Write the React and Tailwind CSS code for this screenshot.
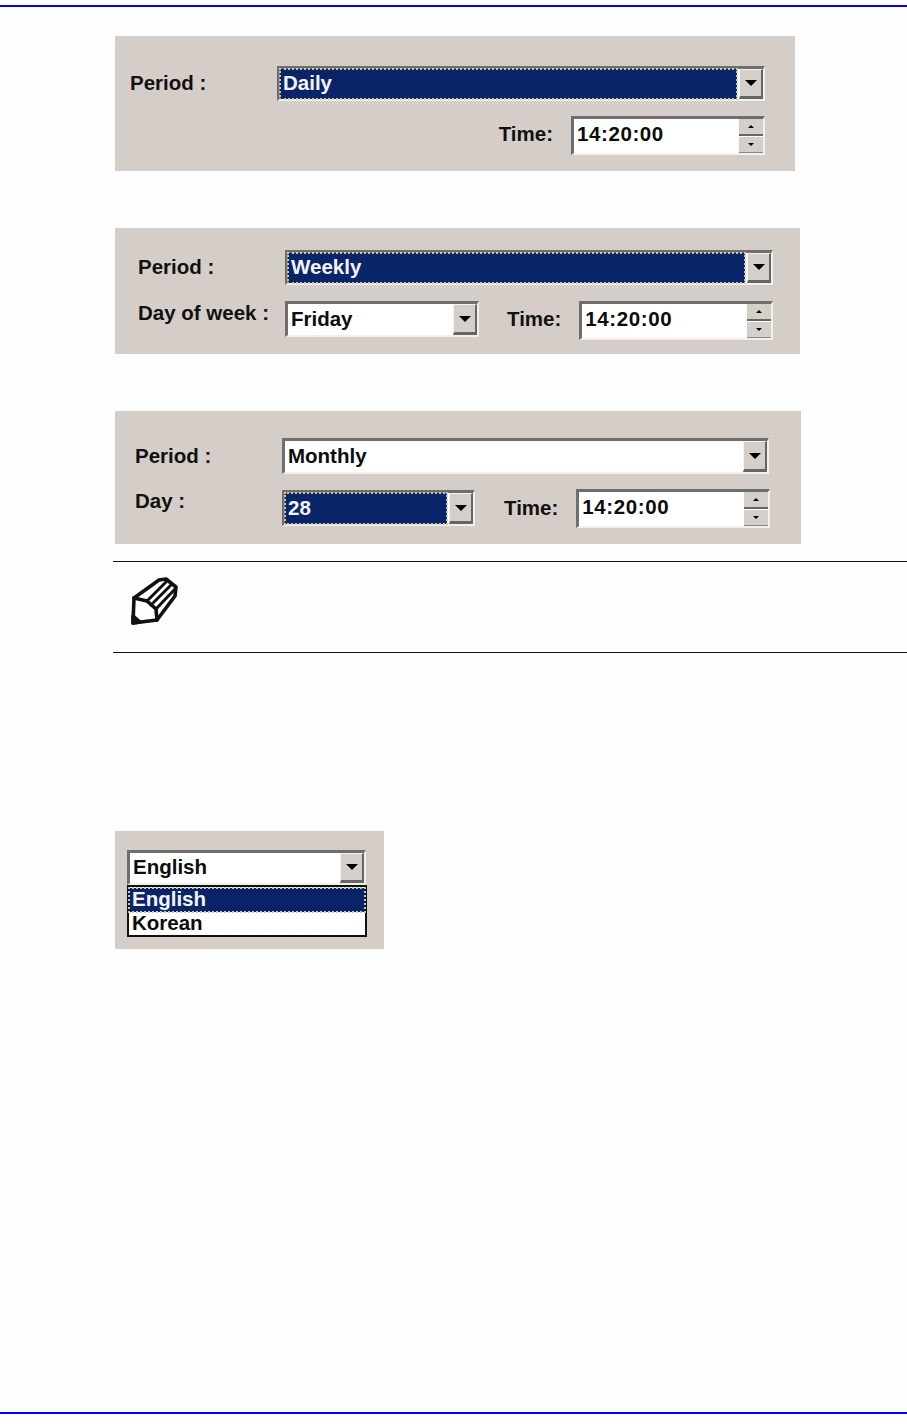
const font = "font-['Liberation_Sans',Arial,sans-serif] font-bold text-[20.5px] leading-none";

function Arrow({ up, small }) {
  const cls = small
    ? up
      ? "border-x-[3px] border-b-[3px] border-x-transparent border-b-black"
      : "border-x-[3px] border-t-[3px] border-x-transparent border-t-black"
    : "border-x-[6px] border-t-[6px] border-x-transparent border-t-black";
  return <span className={`w-0 h-0 ${cls}`} />;
}

function Sunken({ className = "", children }) {
  return (
    <div className={`border-t-[3px] border-l-[3px] border-t-[#6e6e6e] border-l-[#6e6e6e] border-b-2 border-r-2 border-b-[#f2f0ec] border-r-[#f2f0ec] bg-white flex ${className}`}>
      {children}
    </div>
  );
}

function Combo({ value, selected, className }) {
  return (
    <Sunken className={className}>
      <div className={`flex-1 min-w-0 flex items-center pl-[3px] pb-[1px] ${selected ? "bg-[#0a246a] text-[#f4f4f8] outline-dotted outline-2 -outline-offset-1 outline-[#cfc8a0]" : "text-[#0c0c0c]"}`}>
        <span className={font}>{value}</span>
      </div>
      <div className="w-[24px] ml-[2px] flex items-center justify-center bg-[#d4cfc9] border-r-2 border-b-[3px] border-r-[#666] border-b-[#666] border-t border-l border-t-[#f5f3f0] border-l-[#f5f3f0]">
        <Arrow />
      </div>
    </Sunken>
  );
}

function TimeField() {
  return (
    <Sunken className="w-[194px] h-[39px]">
      <div className="flex-1 flex items-center pl-[3px] pb-[4px]">
        <span className={`${font} tracking-[0.6px] text-[#0c0c0c]`}>14:20:00</span>
      </div>
      <div className="w-[24px] flex flex-col">
        <div className="flex-1 flex items-center justify-center bg-[#d4cfc9] border-b-2 border-b-[#666]"><Arrow up small /></div>
        <div className="flex-1 flex items-center justify-center bg-[#d4cfc9] border-b border-b-[#888] border-t border-t-white"><Arrow small /></div>
      </div>
    </Sunken>
  );
}

function Label({ className = "", children }) {
  return <span className={`${font} text-[#111] ${className}`}>{children}</span>;
}

function PencilIcon() {
  return (
    <svg width="48" height="50" viewBox="0 0 48 50" fill="none" stroke="#111" strokeWidth="3.6" strokeLinejoin="round" strokeLinecap="round">
      <path d="M3 47 L4 22 L29 4 L36 3 L46 11 L45 20 L27 44 Z" />
      <path d="M4 22 L17 25 L26 33 L27 44" />
      <path d="M17 25 L36 6 M26 33 L45 13 M21 29 L41 9" strokeWidth="3" />
      <path d="M3 47 L3 40 L10 46 Z" fill="#111" />
    </svg>
  );
}

export default function App() {
  return (
    <div className="w-[907px] h-[1424px] bg-[#fefefe] overflow-hidden pt-[5px]">
      <div className="h-[2px] bg-[#0000ff]" />

      <div className="ml-[115px] mt-[29px] w-[680px] h-[135px] bg-[#d5cec8] pt-[30px] pl-[15px] pr-[30px]">
        <div className="flex items-center h-[35px]">
          <Label className="w-[147px]">Period :</Label>
          <Combo value="Daily" selected className="w-[488px] h-[35px]" />
        </div>
        <div className="flex items-center justify-end mt-[15px]">
          <Label className="mr-[18px] pb-[3px]">Time:</Label>
          <TimeField />
        </div>
      </div>

      <div className="ml-[115px] mt-[57px] w-[685px] h-[126px] bg-[#d5cec8] pt-[22px] pl-[23px]">
        <div className="flex items-center h-[35px]">
          <Label className="w-[147px]">Period :</Label>
          <Combo value="Weekly" selected className="w-[488px] h-[35px]" />
        </div>
        <div className="flex items-start mt-[16px]">
          <Label className="w-[147px] mt-[2px]">Day of week :</Label>
          <Combo value="Friday" className="w-[194px] h-[36px]" />
          <Label className="ml-[28px] mr-[18px] mt-[8px]">Time:</Label>
          <TimeField />
        </div>
      </div>

      <div className="ml-[115px] mt-[57px] w-[686px] h-[133px] bg-[#d5cec8] pt-[27px] pl-[20px]">
        <div className="flex items-center h-[36px]">
          <Label className="w-[147px]">Period :</Label>
          <Combo value="Monthly" className="w-[487px] h-[36px]" />
        </div>
        <div className="flex items-start mt-[15px]">
          <Label className="w-[147px] mt-[2px]">Day :</Label>
          <Combo value="28" selected className="w-[193px] h-[36px] mt-[1px]" />
          <Label className="ml-[29px] mr-[18px] mt-[9px]">Time:</Label>
          <TimeField />
        </div>
      </div>

      <div className="ml-[113px] mt-[17px] h-[92px] border-y border-y-[#111] pl-[17px] pt-[14px]">
        <PencilIcon />
      </div>

      <div className="ml-[115px] mt-[178px] w-[269px] h-[118px] bg-[#d5cec8] pt-[19px] pl-[12px]">
        <Combo value="English" className="w-[239px] h-[35px]" />
        <div className="w-[240px] h-[52px] border-2 border-[#111] bg-white pt-[1px]">
          <div className={`${font} h-[24px] flex items-center pl-[3px] pb-[2px] bg-[#0a246a] text-[#f4f4f8] outline-dotted outline-2 -outline-offset-1 outline-[#cfc8a0]`}>English</div>
          <div className={`${font} h-[23px] flex items-center pl-[3px] text-[#0c0c0c]`}>Korean</div>
        </div>
      </div>

      <div className="mt-[463px] h-[2px] bg-[#0000ff]" />
    </div>
  );
}
